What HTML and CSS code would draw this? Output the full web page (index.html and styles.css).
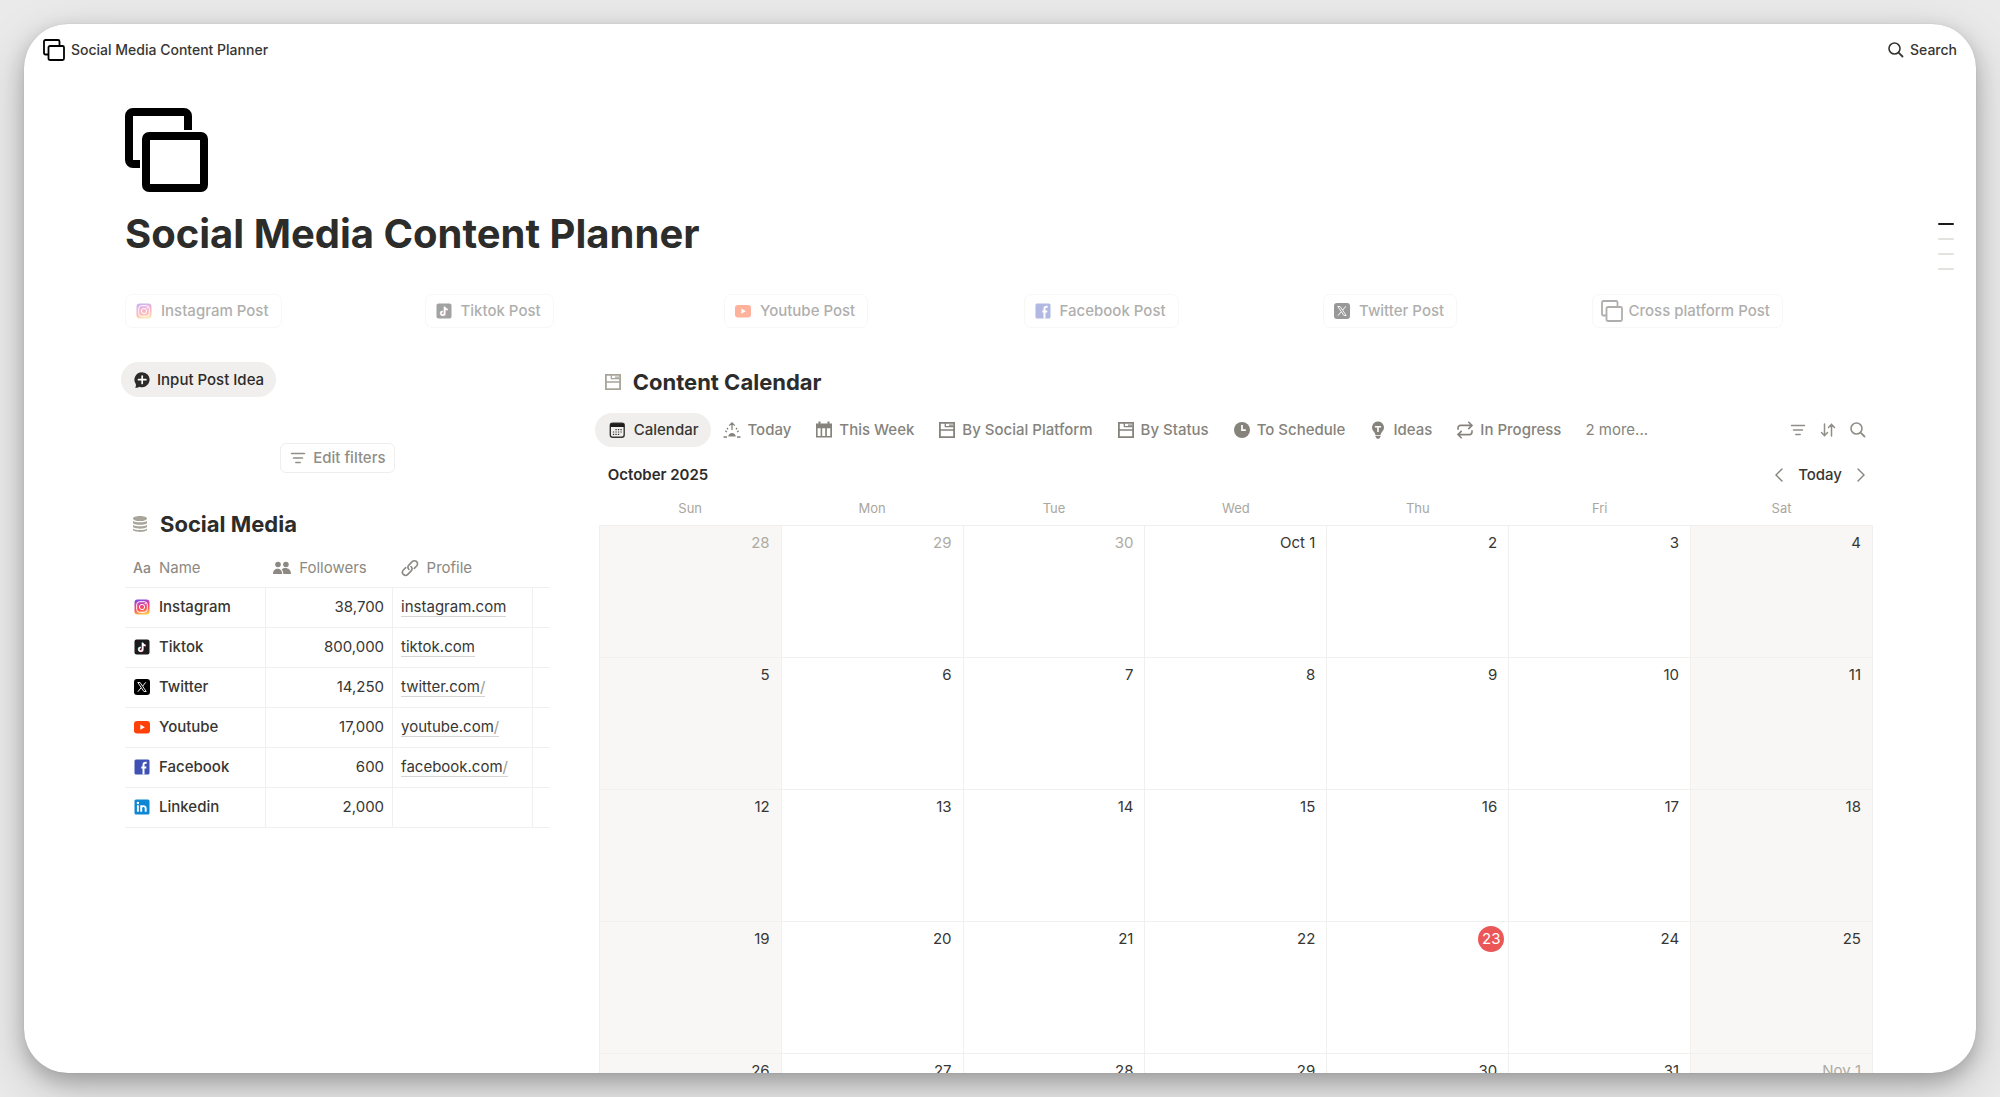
FILE: index.html
```
<!DOCTYPE html>
<html lang="en">

<head>
	<meta charset="utf-8" />
	<meta name="viewport" content="width=device-width, initial-scale=1" />
	<title>Social Media Content Planner</title>
	<link rel="stylesheet" href="styles.css">
</head>

<body>
	<!-- shared icons -->
	<svg class="sprite" width="0" height="0" aria-hidden="true">
		<defs>
			<linearGradient id="ig" x1="0.3" y1="0" x2="0.5" y2="1">
				<stop offset="0" stop-color="#7a4bea" />
				<stop offset="0.35" stop-color="#e0409a" />
				<stop offset="0.65" stop-color="#fb4f55" />
				<stop offset="1" stop-color="#ffc94a" />
			</linearGradient>
			<symbol id="i-copy" viewBox="0 0 84 84">
				<path d="M15 56H8a4 4 0 0 1-4-4V8a4 4 0 0 1 4-4h51a4 4 0 0 1 4 4v14" fill="none" stroke="currentColor" stroke-width="8" />
				<rect x="21" y="28" width="58" height="52" rx="3" fill="none" stroke="currentColor" stroke-width="8" />
			</symbol>
			<symbol id="i-copy-thin" viewBox="0 0 22 22">
				<path d="M5 15.500H2.500a1.500 1.500 0 0 1-1.500-1.500V2.500A1.500 1.500 0 0 1 2.500 1H15a1.500 1.500 0 0 1 1.500 1.500V6" fill="none" stroke="currentColor" stroke-width="1.800" />
				<rect x="5.500" y="7" width="15.500" height="14" rx="1.500" fill="none" stroke="currentColor" stroke-width="1.800" />
			</symbol>
			<symbol id="i-search" viewBox="0 0 18 18">
				<circle cx="7.500" cy="7.500" r="5.500" fill="none" stroke="currentColor" stroke-width="1.600" />
				<path d="M11.600 11.600L15.500 15.500" fill="none" stroke="currentColor" stroke-width="1.800" stroke-linecap="round" />
			</symbol>
			<symbol id="i-instagram" viewBox="0 0 18 18">
				<rect x="1.500" y="1.500" width="15" height="15" rx="3" fill="url(#ig)" />
				<rect x="3.700" y="3.700" width="10.600" height="10.600" rx="3" fill="none" stroke="#fff" />
				<circle cx="9" cy="9" r="2.600" fill="none" stroke="#fff" />
				<circle cx="12.200" cy="5.800" r="0.700" fill="#fff" />
			</symbol>
			<symbol id="i-tiktok" viewBox="0 0 18 18">
				<rect x="1.500" y="1.500" width="15" height="15" rx="2" fill="#1c1a1c" />
				<path d="M9.300 4.500v6.600a1.900 1.900 0 1 1-1.900-1.900M9.300 5c.3 1.400 1.400 2.200 2.900 2.300" fill="none" stroke="#3cdfe6" stroke-width="1.500" />
				<path d="M10.100 4.900v6.600a1.900 1.900 0 1 1-1.900-1.900M10.100 5.400c.3 1.400 1.400 2.200 2.900 2.300" fill="none" stroke="#f0365c" stroke-width="1.500" />
				<path d="M9.700 4.700v6.600a1.900 1.900 0 1 1-1.900-1.900M9.700 5.200c.3 1.400 1.400 2.200 2.900 2.300" fill="none" stroke="#fff" stroke-width="1.400" />
			</symbol>
			<symbol id="i-twitter" viewBox="0 0 18 18">
				<rect x="1" y="1" width="16" height="16" rx="3" fill="#000" />
				<path d="M4.800 4.500h2.300l6.100 9h-2.300z" fill="none" stroke="#fff" stroke-width="0.900" />
				<path d="M12.800 4.300L9.700 8M8.100 9.900l-3.200 3.800" stroke="#fff" />
			</symbol>
			<symbol id="i-youtube" viewBox="0 0 18 18">
				<rect x="1" y="3" width="16" height="12.400" rx="3" fill="#ff4008" />
				<path d="M7.400 6.600v5.200L11.800 9.200z" fill="#fff" />
			</symbol>
			<symbol id="i-facebook" viewBox="0 0 18 18">
				<rect x="1.500" y="1.500" width="15" height="15" rx="1.500" fill="#3f51b5" />
				<path d="M13.700 4.800h-1.200c-1.300 0-2 .7-2 2v9.700M8.300 9.400h5" fill="none" stroke="#fff" stroke-width="2" />
			</symbol>
			<symbol id="i-linkedin" viewBox="0 0 18 18">
				<rect x="1.500" y="1.500" width="15" height="15" rx="1.500" fill="#0d87d4" />
				<circle cx="4.900" cy="5" r="1.200" fill="#fff" />
				<path d="M4.900 7.300v6.500M8.200 7.300v6.500M8.200 10.200c0-2.700 4.500-2.800 4.500 0v3.600" fill="none" stroke="#fff" stroke-width="1.900" />
			</symbol>
			<symbol id="i-filter" viewBox="0 0 18 18">
				<path d="M2.500 4.500h13M4.500 9h9M6.800 13.500h4.400" stroke="currentColor" stroke-width="1.500" stroke-linecap="round" />
			</symbol>
			<symbol id="i-gallery" viewBox="0 0 18 18">
				<path d="M1 1h16v16H1zM2.800 2.800v5.400h12.400V2.800zM2.800 9.800v5.400h12.400V9.800z" fill="currentColor" fill-rule="evenodd" />
				<path d="M7.300 2v4.200M6.700 5.600h9M11 4.100h4" stroke="currentColor" stroke-width="1.300" />
			</symbol>
			<symbol id="i-bubble" viewBox="0 0 18 18">
				<path d="M9 1.200a7.500 7.500 0 1 1-2.600 14.500c-1 .9-2.800 1.300-4.300 1 .8-.8 1-1.900.7-3.700A7.500 7.500 0 0 1 9 1.200z" fill="#2c2b29" />
				<path d="M9.200 5v7.400M5.500 8.700h7.400" stroke="#fff" stroke-width="1.700" stroke-linecap="round" />
			</symbol>
			<symbol id="i-database" viewBox="0 0 18 18">
				<path d="M2 3.400C2 2 5 1 9 1s7 1 7 2.400S13 6 9 6 2 4.800 2 3.400zM2 6c2 1.700 12 1.700 14 0v1.700c0 2.800-14 2.800-14 0zM2 9.900c2 1.700 12 1.700 14 0v1.700c0 2.800-14 2.800-14 0zM2 13.800c2 1.700 12 1.700 14 0v1c0 2.800-14 2.800-14 0z" fill="currentColor" />
			</symbol>
			<symbol id="i-people" viewBox="0 0 18 18">
				<circle cx="5" cy="5.500" r="2.800" fill="currentColor" />
				<circle cx="12.900" cy="5.500" r="2.800" fill="currentColor" />
				<path d="M0 15c0-7 9.200-7 9.200 0zM10.300 15c0-2-.5-3.400-1.600-4.500C12 7.600 18 9.300 18 15z" fill="currentColor" />
			</symbol>
			<symbol id="i-link" viewBox="0 0 18 18">
				<path d="M8 10.500a3.300 3.300 0 0 1 0-4.600l3.200-3.300a3.100 3.100 0 0 1 4.400 4.400l-2.300 2.400M10 7.500a3.300 3.300 0 0 1 0 4.600l-3.200 3.300A3.100 3.100 0 0 1 2.400 11l2.300-2.400" fill="none" stroke="currentColor" stroke-width="1.600" stroke-linecap="round" />
			</symbol>
			<symbol id="i-calendar" viewBox="0 0 18 18">
				<rect x="2.300" y="2.300" width="13.900" height="13.900" rx="2.500" fill="none" stroke="currentColor" stroke-width="1.400" />
				<path d="M2.300 2.500h14v3.500h-14z" fill="#1f1e1c" />
				<path d="M7.400 8.700h6.500M4.900 11h9M4.900 13.300h6.500" stroke="currentColor" stroke-width="1.200" stroke-dasharray="1.300 1.200" />
			</symbol>
			<symbol id="i-sunrise" viewBox="0 0 18 18">
				<path d="M5.300 15.500c0-4.800 7.400-4.800 7.400 0z" fill="currentColor" />
				<path d="M9 9V2M6.200 4.600L9 1.800l2.800 2.800M0.500 16H4M14 16h3.500M2.300 9.700l1.600 1.200M15.700 9.700l-1.600 1.200M4 7l1 1.300M14 7l-1 1.300" fill="none" stroke="currentColor" stroke-width="1.300" />
			</symbol>
			<symbol id="i-week" viewBox="0 0 18 18">
				<path d="M1 2.500h2.500V.5h2v2h7v-2h2v2H17v14H1zM2.600 7.200v7.700h3V7.200zM7.200 7.200v7.700h3V7.200zM11.900 7.200v7.700h3.400V7.200z" fill="currentColor" fill-rule="evenodd" />
			</symbol>
			<symbol id="i-clock" viewBox="0 0 18 18">
				<circle cx="9" cy="9" r="8" fill="currentColor" />
				<path d="M9 4v5.200h3.800" fill="none" stroke="#fff" stroke-width="1.700" />
			</symbol>
			<symbol id="i-bulb" viewBox="0 0 18 18">
				<path d="M9 .5a6 6 0 0 1 4 10.400c-.8.900-1.300 1.600-1.300 3H6.300c0-1.400-.5-2.100-1.300-3A6 6 0 0 1 9 .5zM6.500 14.800h5v1L10 17.700H8l-1.500-1.900z" fill="currentColor" />
				<path d="M5.900 5.700h6.200M9 5.700V11" stroke="#fff" stroke-width="1.600" />
			</symbol>
			<symbol id="i-repeat" viewBox="0 0 18 18">
				<path d="M2 8.300V7a2.600 2.600 0 0 1 2.600-2.600H16M12.800 1.200L16 4.400l-3.200 3.200M16 9.700V11a2.600 2.600 0 0 1-2.600 2.600H2M5.200 10.400L2 13.600l3.200 3.200" fill="none" stroke="currentColor" stroke-width="1.600" stroke-linecap="round" />
			</symbol>
			<symbol id="i-sort" viewBox="0 0 18 18">
				<path d="M5.500 3v11.500M2.500 11.500l3 3.200 3-3.200M12.500 15V3.500M9.500 6.500l3-3.200 3 3.200" fill="none" stroke="currentColor" stroke-width="1.500" stroke-linecap="round" />
			</symbol>
			<symbol id="i-prev" viewBox="0 0 18 18">
				<path d="M12 3L6 9l6 6" fill="none" stroke="currentColor" stroke-width="1.400" stroke-linecap="round" />
			</symbol>
			<symbol id="i-next" viewBox="0 0 18 18">
				<path d="M6 3l6 6-6 6" fill="none" stroke="currentColor" stroke-width="1.400" stroke-linecap="round" />
			</symbol>
		</defs>
	</svg>

	<div class="window">
		<header class="topbar">
			<a class="crumb" href="#"><svg class="icon-lg"><use href="#i-copy-thin" /></svg>Social Media Content Planner</a>
			<button class="search" type="button"><svg class="icon"><use href="#i-search" /></svg>Search</button>
		</header>

		<nav class="outline" aria-label="Sections">
			<a class="mark on" href="#top"></a>
			<a class="mark" href="#idea"></a>
			<a class="mark" href="#media"></a>
			<a class="mark" href="#calendar"></a>
		</nav>

		<main class="page" id="top">
			<svg class="cover"><use href="#i-copy" /></svg>
			<h1>Social Media Content Planner</h1>

			<div class="posts">
				<div><button class="post" type="button"><svg class="icon"><use href="#i-instagram" /></svg>Instagram Post</button></div>
				<div><button class="post" type="button"><svg class="icon"><use href="#i-tiktok" /></svg>Tiktok Post</button></div>
				<div><button class="post" type="button"><svg class="icon"><use href="#i-youtube" /></svg>Youtube Post</button></div>
				<div><button class="post" type="button"><svg class="icon"><use href="#i-facebook" /></svg>Facebook Post</button></div>
				<div><button class="post" type="button"><svg class="icon"><use href="#i-twitter" /></svg>Twitter Post</button></div>
				<div><button class="post cross" type="button"><svg class="icon-lg"><use href="#i-copy-thin" /></svg>Cross platform Post</button></div>
			</div>

			<div class="columns">
				<section class="side">
					<button class="idea" id="idea" type="button"><svg class="icon"><use href="#i-bubble" /></svg>Input Post Idea</button>
					<button class="filters" type="button"><svg class="icon"><use href="#i-filter" /></svg>Edit filters</button>

					<h2 class="side-title" id="media"><svg class="icon"><use href="#i-database" /></svg>Social Media</h2>
					<table class="media">
						<thead>
							<tr>
								<th class="c-name"><span class="head"><span class="aa" aria-hidden="true">Aa</span>Name</span></th>
								<th class="c-count"><span class="head"><svg class="icon"><use href="#i-people" /></svg>Followers</span></th>
								<th class="c-link"><span class="head"><svg class="icon"><use href="#i-link" /></svg>Profile</span></th>
								<th></th>
							</tr>
						</thead>
						<tbody>
							<tr><td><span class="name"><svg class="icon"><use href="#i-instagram" /></svg>Instagram</span></td><td class="num">38,700</td><td><a href="#">instagram.com</a></td><td></td></tr>
							<tr><td><span class="name"><svg class="icon"><use href="#i-tiktok" /></svg>Tiktok</span></td><td class="num">800,000</td><td><a href="#">tiktok.com</a></td><td></td></tr>
							<tr><td><span class="name"><svg class="icon"><use href="#i-twitter" /></svg>Twitter</span></td><td class="num">14,250</td><td><a href="#">twitter.com<i>/</i></a></td><td></td></tr>
							<tr><td><span class="name"><svg class="icon"><use href="#i-youtube" /></svg>Youtube</span></td><td class="num">17,000</td><td><a href="#">youtube.com<i>/</i></a></td><td></td></tr>
							<tr><td><span class="name"><svg class="icon"><use href="#i-facebook" /></svg>Facebook</span></td><td class="num">600</td><td><a href="#">facebook.com<i>/</i></a></td><td></td></tr>
							<tr><td><span class="name"><svg class="icon"><use href="#i-linkedin" /></svg>Linkedin</span></td><td class="num">2,000</td><td></td><td></td></tr>
						</tbody>
					</table>
				</section>

				<section class="content" id="calendar">
					<h2 class="content-title"><svg class="icon"><use href="#i-gallery" /></svg>Content Calendar</h2>
					<div class="views">
						<button class="tab on" type="button"><svg class="icon"><use href="#i-calendar" /></svg>Calendar</button>
						<button class="tab" type="button"><svg class="icon"><use href="#i-sunrise" /></svg>Today</button>
						<button class="tab" type="button"><svg class="icon"><use href="#i-week" /></svg>This Week</button>
						<button class="tab" type="button"><svg class="icon"><use href="#i-gallery" /></svg>By Social Platform</button>
						<button class="tab" type="button"><svg class="icon"><use href="#i-gallery" /></svg>By Status</button>
						<button class="tab" type="button"><svg class="icon"><use href="#i-clock" /></svg>To Schedule</button>
						<button class="tab" type="button"><svg class="icon"><use href="#i-bulb" /></svg>Ideas</button>
						<button class="tab" type="button"><svg class="icon"><use href="#i-repeat" /></svg>In Progress</button>
						<button class="tab more" type="button">2 more...</button>
						<div class="tools">
							<button type="button" aria-label="Filter"><svg class="icon"><use href="#i-filter" /></svg></button>
							<button type="button" aria-label="Sort"><svg class="icon"><use href="#i-sort" /></svg></button>
							<button type="button" aria-label="Search"><svg class="icon"><use href="#i-search" /></svg></button>
						</div>
					</div>
					<div class="month">
						<h3>October 2025</h3>
						<div class="pager">
							<button type="button" aria-label="Previous month"><svg class="icon"><use href="#i-prev" /></svg></button>
							<button class="today" type="button">Today</button>
							<button type="button" aria-label="Next month"><svg class="icon"><use href="#i-next" /></svg></button>
						</div>
					</div>
					<table class="days">
						<thead>
							<tr><th>Sun</th><th>Mon</th><th>Tue</th><th>Wed</th><th>Thu</th><th>Fri</th><th>Sat</th></tr>
						</thead>
						<tbody>
							<tr><td class="off">28</td><td class="off">29</td><td class="off">30</td><td>Oct 1</td><td>2</td><td>3</td><td>4</td></tr>
							<tr><td>5</td><td>6</td><td>7</td><td>8</td><td>9</td><td>10</td><td>11</td></tr>
							<tr><td>12</td><td>13</td><td>14</td><td>15</td><td>16</td><td>17</td><td>18</td></tr>
							<tr><td>19</td><td>20</td><td>21</td><td>22</td><td class="now"><span>23</span></td><td>24</td><td>25</td></tr>
							<tr><td>26</td><td>27</td><td>28</td><td>29</td><td>30</td><td>31</td><td class="off">Nov 1</td></tr>
						</tbody>
					</table>
				</section>
			</div>
		</main>
	</div>
</body>

</html>
```
FILE: styles.css
```
* {
	box-sizing:border-box;
}

body {
	margin:0;
	padding:24px;
	height:100vh;
	overflow:hidden;
	background-color:#eaeaea;
	color:#373633;
	font-family:Inter, "Liberation Sans", sans-serif;
	font-size:15px;
	line-height:20px;
}

.sprite {
	position:absolute;
}

.window {
	position:relative;
	height:100%;
	overflow:hidden;
	border-radius:44px;
	background-color:#fff;
	box-shadow:0 0 1px rgba(0,0,0,0.2), 0 8px 20px rgba(0,0,0,0.22), 0 16px 50px rgba(0,0,0,0.18);
}

h1, h2, h3 {
	margin:0;
	color:#2c2c2b;
}

h1 {
	margin:16px 0 34px;
	font-size:40px;
	line-height:52px;
	font-weight:700;
}

h2 {
	display:flex;
	align-items:center;
	font-size:22px;
	line-height:32px;
	font-weight:700;
}

h2 .icon {
	color:#a9a59b;
}

h3 {
	font-size:15px;
	font-weight:600;
}

button {
	display:inline-flex;
	align-items:center;
	margin:0;
	padding:0;
	border:0;
	background:none;
	color:inherit;
	font:inherit;
	white-space:nowrap;
}

a {
	color:inherit;
	text-decoration:none;
}

.icon {
	flex:none;
	width:18px;
	height:18px;
}

.icon-lg {
	flex:none;
	width:22px;
	height:22px;
}

/* top bar */
.topbar {
	display:flex;
	align-items:center;
	justify-content:space-between;
	height:52px;
	padding:0 19px;
}

.crumb {
	display:flex;
	align-items:center;
	gap:6px;
	font-size:14px;
	font-weight:500;
}

.crumb .icon-lg {
	color:#000;
}

.search {
	gap:5px;
	font-size:14px;
	font-weight:500;
}

/* section marks over the right margin */
.outline {
	position:absolute;
	top:199px;
	right:22px;
	display:grid;
	gap:13px;
}

.mark {
	width:16px;
	height:2px;
	border-radius:1px;
	background-color:#e3e2df;
}

.mark.on {
	background-color:#1d1b1a;
}

.page {
	padding:32px 103px 0 101px;
}

.cover {
	display:block;
	width:84px;
	height:84px;
	color:#000;
}

/* post buttons */
.posts {
	display:grid;
	grid-template-columns:repeat(4, 299fr) 268fr 281fr;
	margin-bottom:34px;
}

.post {
	gap:8px;
	height:34px;
	padding:0 12px 0 9px;
	border:1px solid #ececea;
	border-radius:7px;
	font-weight:500;
	opacity:0.4;
}

.cross {
	gap:6px;
	padding-left:8px;
}

.columns {
	display:grid;
	grid-template-columns:1fr 3fr;
	gap:49px;
}

/* left column */
.side {
	display:flex;
	flex-direction:column;
	align-items:flex-start;
}

.idea {
	gap:6px;
	height:35px;
	margin-left:-4px;
	padding:0 12px;
	border-radius:18px;
	background-color:#f0efed;
	color:#2c2b29;
	font-weight:500;
}

.filters {
	align-self:center;
	gap:6px;
	height:30px;
	margin:46px 0 35px;
	padding:0 8px;
	border:1px solid #efeeec;
	border-radius:6px;
	color:#908e87;
	font-weight:500;
}

.side-title {
	gap:11px;
	margin-bottom:9px;
	padding-left:6px;
}

.media {
	width:100%;
	table-layout:fixed;
	border-collapse:collapse;
}

.media th {
	height:38px;
	padding:0 0 0 8px;
	color:#8b8982;
	font-weight:400;
	text-align:left;
}

.media .head, .name {
	display:flex;
	align-items:center;
	gap:8px;
}

.aa {
	width:18px;
	font-size:14px;
	font-weight:500;
}

.c-name {
	width:33%;
}

.c-count {
	width:30%;
}

.c-link {
	width:33%;
}

.media td {
	height:40px;
	padding:0 8px;
	border:1px solid #f1f0ee;
}

.media td:first-child {
	border-left:0;
}

.media td:last-child {
	border-right:0;
}

.name {
	font-weight:500;
}

.media .num {
	text-align:right;
}

.media a {
	border-bottom:1px solid #d6d5d2;
}

.media i {
	color:#9d9b95;
	font-style:normal;
}

/* calendar */
.content-title {
	gap:11px;
	margin:4px 0 15px;
	padding-left:5px;
}

.views {
	display:flex;
	align-items:center;
	margin-left:-4px;
	color:#85837c;
}

.tab {
	gap:6px;
	height:34px;
	padding:0 12px;
	border-radius:17px;
	font-weight:500;
}

.tab.on {
	gap:8px;
	padding:0 13px;
	background-color:#f0efed;
	color:#373633;
}

.tab.more {
	font-weight:400;
}

.tools {
	display:flex;
	gap:12px;
	margin-left:auto;
	padding-right:6px;
	color:#908e87;
}

.month {
	display:flex;
	align-items:center;
	justify-content:space-between;
	height:34px;
	margin-top:11px;
	padding:0 3px 0 9px;
}

.pager {
	display:flex;
	align-items:center;
	gap:10px;
	color:#85837c;
}

.today {
	color:#373633;
	font-weight:500;
}

.days {
	width:100%;
	table-layout:fixed;
	border-collapse:collapse;
}

.days th {
	height:33px;
	padding:0;
	color:#a9a69d;
	font-size:13px;
	font-weight:400;
}

.days td {
	height:132px;
	padding:7px 11px;
	border:1px solid #f1f0ee;
	text-align:right;
	vertical-align:top;
}

.days td:first-child, .days td:last-child {
	background-color:#f8f7f5;
}

.days .off {
	color:#aeaba3;
}

.days .now {
	padding:4px;
}

.now span {
	display:inline-block;
	width:26px;
	border-radius:50%;
	background-color:#eb5757;
	color:#fff;
	line-height:26px;
	text-align:center;
}
```
